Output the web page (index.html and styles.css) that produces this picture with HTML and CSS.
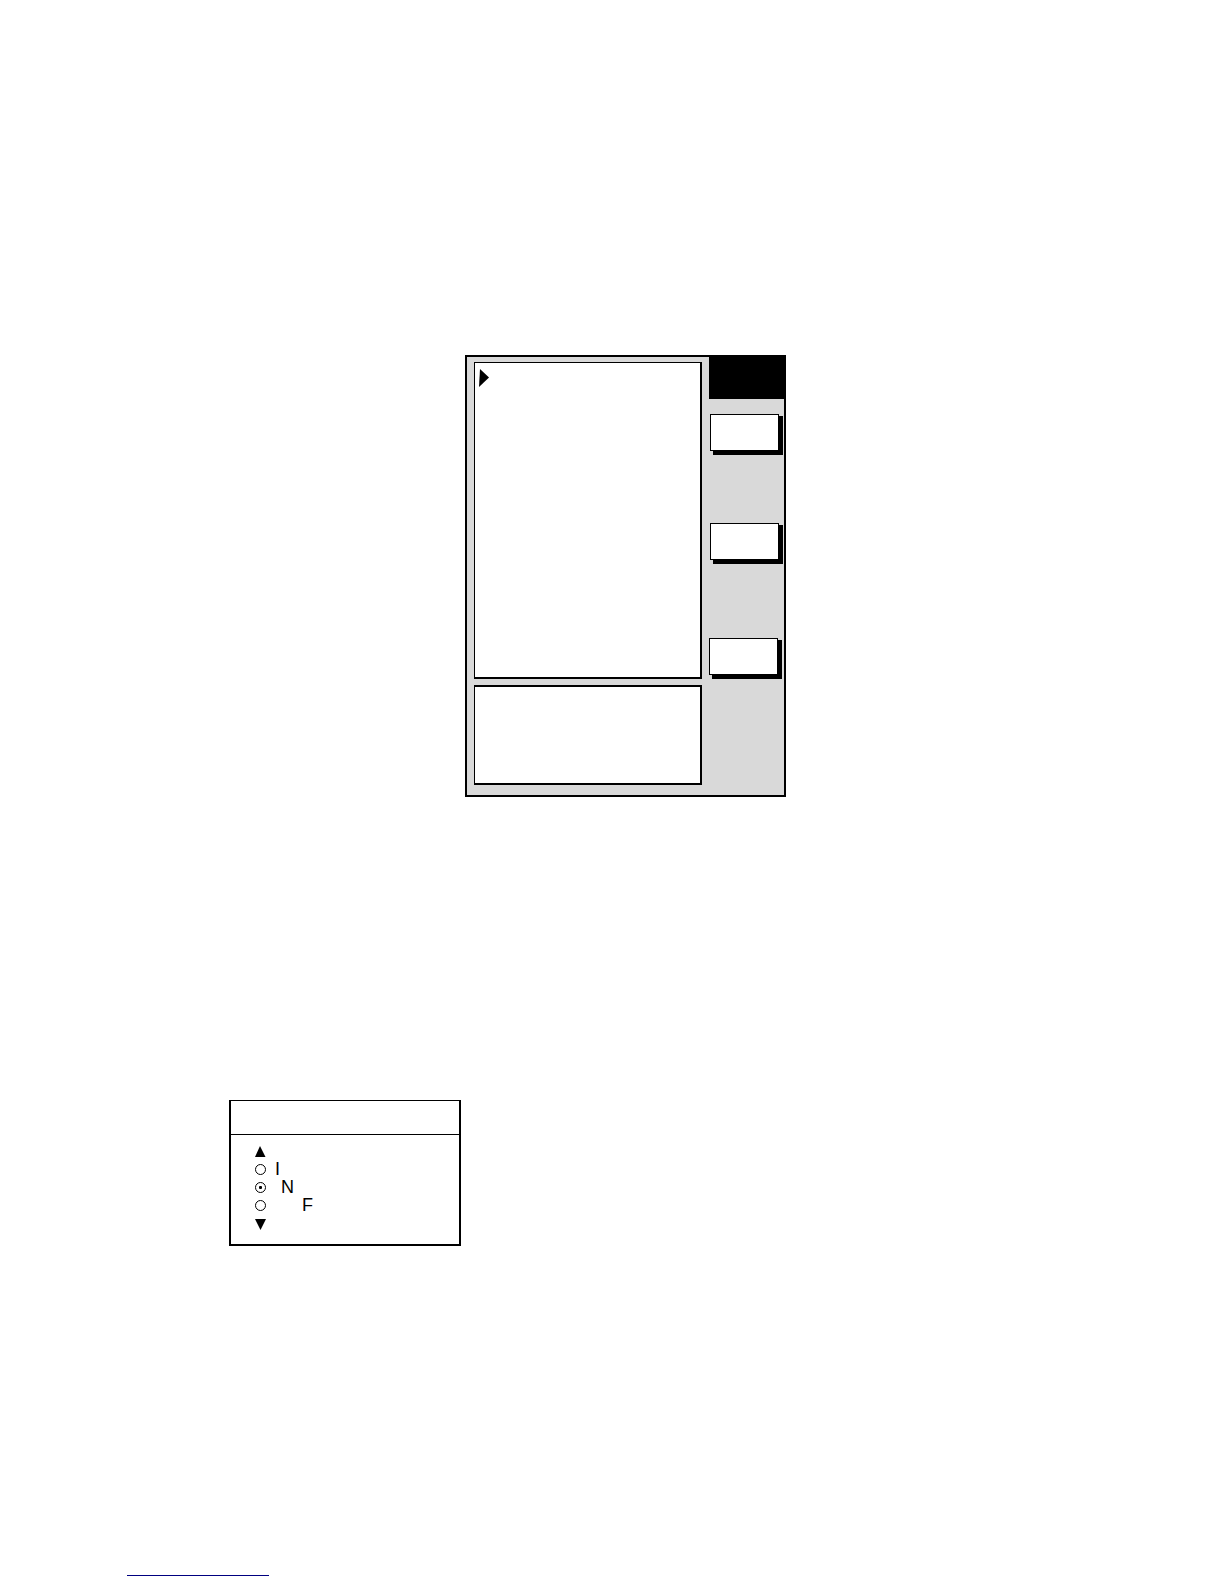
FILE: index.html
```html
<!DOCTYPE html>
<html lang="en">
<head>
    <meta charset="UTF-8">
    <meta name="viewport" content="width=device-width, initial-scale=1.0">
    <title>Menu</title>
    <link rel="stylesheet" href="styles.css">
</head>
<body>

    <main class="page">
        <section class="screen">
            <div class="panels">
                <div class="panel panel-list">
                    <svg class="cursor" width="10" height="18" viewBox="0 0 10 18" aria-hidden="true">
                        <path d="M1 0L10 8.5L0 18Z"/>
                    </svg>
                </div>
                <div class="panel panel-info"></div>
            </div>
            <div class="keys">
                <div class="keys-title"></div>
                <button type="button" class="key" aria-label="Key 1"></button>
                <button type="button" class="key" aria-label="Key 2"></button>
                <button type="button" class="key" aria-label="Key 3"></button>
            </div>
        </section>

        <form class="dialog">
            <div class="dialog-title"></div>
            <div class="dialog-body">
                <button type="button" class="arrow" aria-label="Up">
                    <svg width="11" height="11" viewBox="0 0 11 11"><path d="M5 0L10.5 11H0Z"/></svg>
                </button>
                <div class="options">
                    <label class="option"><input type="radio" name="option"><span>I</span></label>
                    <label class="option"><input type="radio" name="option" checked><span class="indent">N</span></label>
                    <label class="option"><input type="radio" name="option"><span class="indent-more">F</span></label>
                </div>
                <button type="button" class="arrow" aria-label="Down">
                    <svg width="11" height="11" viewBox="0 0 11 11"><path d="M0 0H11L5.5 11Z"/></svg>
                </button>
            </div>
        </form>

        <footer>
            <a class="footer-link" href="#" aria-label="Home"></a>
        </footer>
    </main>

</body>
</html>
```

FILE: styles.css
```css
* {
    box-sizing: border-box;
}

body {
    font-family: "Liberation Sans", Arial, sans-serif;
    font-size: 18px;
    line-height: 18px;
    background-color: #fff;
    color: #000;
    margin: 0;
}

.page {
    display: flex;
    flex-direction: column;
    padding-top: 355px;
}

/* Display with the soft keys */
.screen {
    display: flex;
    gap: 7px;
    width: 100%;
    max-width: 321px;
    margin-left: 38%;
    border: 2px solid #000;
    background-color: #d9d9d9;
}

.panels {
    flex: 1;
    display: flex;
    flex-direction: column;
    gap: 6px;
    padding: 5px 0 10px 7px;
}

.panel {
    background-color: #fff;
    border: 2px solid #000;
    border-left-width: 1px;
}

.panel-list {
    min-height: 317px;
    padding: 6px 4px;
    border-top-width: 1px;
}

.panel-info {
    min-height: 100px;
}

.cursor {
    display: block;
}

.keys {
    width: 75px;
}

.keys-title {
    height: 42px;
    margin-bottom: 15px;
    background-color: #000;
}

.key {
    display: block;
    width: 69px;
    height: 37px;
    margin: 0 0 72px 1px;
    padding: 0;
    border: 1px solid #000;
    background-color: #fff;
    box-shadow: 4px 2px #000, 3px 4px #000, 4px 4px #000;
    cursor: pointer;
}

.key:last-child {
    margin: 78px 0 0;
}

/* Selection window */
.dialog {
    width: 100%;
    max-width: 232px;
    margin: 303px 0 0 229px;
    border: 2px solid #000;
    border-top-width: 1px;
}

.dialog-title {
    height: 34px;
    border-bottom: 1px solid #000;
}

.dialog-body {
    padding: 7px 24px 11px;
}

.options {
    margin-bottom: 1px;
}

.option {
    display: flex;
    align-items: center;
    gap: 9px;
    height: 18px;
}

.option input {
    appearance: none;
    display: flex;
    align-items: center;
    justify-content: center;
    width: 11px;
    height: 11px;
    margin: 0;
    border: 1px solid #000;
    border-radius: 50%;
}

.option input:checked::before {
    content: "";
    width: 3px;
    height: 3px;
    border-radius: 1px;
    background-color: #000;
}

.indent {
    padding-left: 6px;
}

.indent-more {
    padding-left: 27px;
}

.arrow {
    display: flex;
    align-items: center;
    height: 18px;
    padding: 0;
    border: none;
    background: none;
    cursor: pointer;
}

.footer-link {
    display: block;
    width: 142px;
    margin: 329px 0 0 127px;
    border-bottom: 1px solid #000080;
}
```
